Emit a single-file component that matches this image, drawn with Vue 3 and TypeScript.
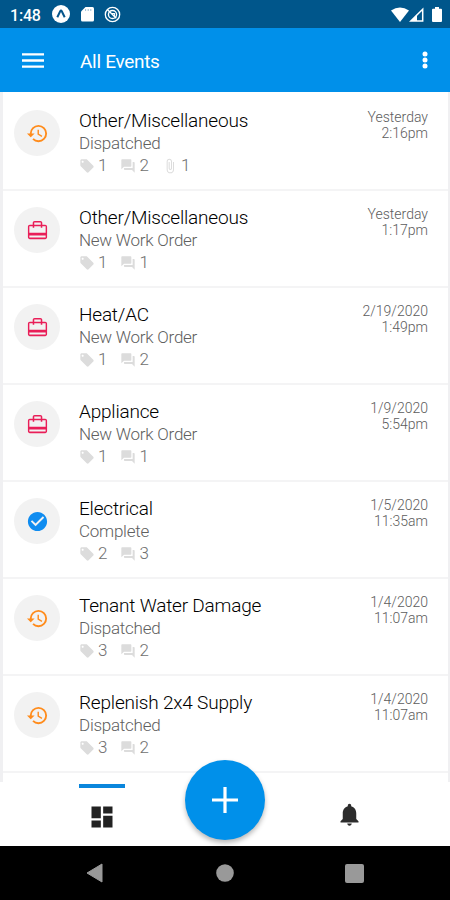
<script setup lang="ts">
type Kind = 'history' | 'travel' | 'done'

interface EventItem {
  title: string
  status: string
  kind: Kind
  tags: number
  comments: number
  files?: number
  date: string
  time: string
}

const events: EventItem[] = [
  { title: 'Other/Miscellaneous', status: 'Dispatched', kind: 'history', tags: 1, comments: 2, files: 1, date: 'Yesterday', time: '2:16pm' },
  { title: 'Other/Miscellaneous', status: 'New Work Order', kind: 'travel', tags: 1, comments: 1, date: 'Yesterday', time: '1:17pm' },
  { title: 'Heat/AC', status: 'New Work Order', kind: 'travel', tags: 1, comments: 2, date: '2/19/2020', time: '1:49pm' },
  { title: 'Appliance', status: 'New Work Order', kind: 'travel', tags: 1, comments: 1, date: '1/9/2020', time: '5:54pm' },
  { title: 'Electrical', status: 'Complete', kind: 'done', tags: 2, comments: 3, date: '1/5/2020', time: '11:35am' },
  { title: 'Tenant Water Damage', status: 'Dispatched', kind: 'history', tags: 3, comments: 2, date: '1/4/2020', time: '11:07am' },
  { title: 'Replenish 2x4 Supply', status: 'Dispatched', kind: 'history', tags: 3, comments: 2, date: '1/4/2020', time: '11:07am' },
]

const kindPaths: Record<Kind, string> = {
  history: 'M13 3a9 9 0 0 0-9 9H1l3.89 3.89.07.14L9 12H6c0-3.87 3.13-7 7-7s7 3.13 7 7-3.13 7-7 7c-1.93 0-3.68-.79-4.94-2.06l-1.42 1.42A8.954 8.954 0 0 0 13 21a9 9 0 0 0 0-18zm-1 5v5l4.28 2.54.72-1.21-3.5-2.08V8H12z',
  travel: 'M20 6h-3V4c0-1.11-.89-2-2-2H9c-1.11 0-2 .89-2 2v2H4c-1.11 0-2 .89-2 2v11c0 1.11.89 2 2 2h16c1.11 0 2-.89 2-2V8c0-1.11-.89-2-2-2zM8.600 3.600h6.800V6H8.600V3.600zM20.500 19.400H3.500v-2.300h17v2.300zm0-5H3.500V7.600H7v1.600h1.600V7.600h6.800v1.600H17V7.600h3.500v6.800z',
  done: 'M12 2C6.48 2 2 6.48 2 12s4.480 10 10 10 10-4.480 10-10S17.520 2 12 2zm-2 15l-5-5 1.410-1.410L10 14.170l7.590-7.590L19 8l-9 9z',
}
</script>

<template>
  <div class="screen">
    <header class="status-bar">
      <span class="clock">1:48</span>
      <svg class="st-icon" viewBox="0 0 18 18">
        <circle cx="9" cy="9" r="9" fill="#fff" />
        <path d="M5.300 12.200 8.200 6.200q.8-1.300 1.600 0l2.900 6" fill="none" stroke="#04548a" stroke-width="2" />
      </svg>
      <svg class="st-icon card" viewBox="0 0 13 16">
        <path d="M4.500 1H11.500Q13 1 13 2.500V14Q13 15.500 11.500 15.500H1.500Q0 15.500 0 14V5.500Z" fill="#fff" />
        <path d="M4.600 3v2M7.200 3v2M9.800 3v2" stroke="#9dbdd3" stroke-width="1" />
      </svg>
      <svg class="st-icon ring" viewBox="0 0 18 18" fill="none" stroke="#fff">
        <circle cx="9" cy="9" r="7.600" stroke-width="1.400" />
        <circle cx="9" cy="9" r="4.300" stroke-width="1.500" />
        <path d="M3.500 3.800 13 13" stroke-width="1.500" />
        <path d="M8 8h3v3" stroke-width="1.200" />
      </svg>
      <div class="system">
        <svg width="18" height="15" viewBox="0 0 18 15"><path d="M0 3.600Q9-2.600 18 3.600L9 15Z" fill="#fff" /></svg>
        <svg width="15" height="15" viewBox="0 0 15 15">
          <path d="M13.700 2.200V14H1.800Z" fill="none" stroke="#fff" stroke-width="1.500" />
          <path d="M8 7.500V14H2Z" fill="#fff" />
        </svg>
        <svg class="battery" width="10" height="15" viewBox="0 0 10 15"><path d="M3 0h4v1.700h2q1 0 1 1V14q0 1-1 1H1q-1 0-1-1V2.700q0-1 1-1h2z" fill="#fff" /></svg>
      </div>
    </header>

    <div class="app-bar">
      <svg class="menu" width="22" height="15" viewBox="0 0 22 15"><path d="M0 1.300h22M0 7.500h22M0 13.700h22" stroke="#fff" stroke-width="2.300" /></svg>
      <h1>All Events</h1>
      <svg class="more" width="6" height="18" viewBox="0 0 6 18" fill="#fff"><circle cx="3" cy="3" r="2.500" /><circle cx="3" cy="9" r="2.500" /><circle cx="3" cy="15" r="2.500" /></svg>
    </div>

    <main class="list">
      <article v-for="(e, i) in events" :key="i" class="row">
        <div class="avatar" :class="e.kind">
          <svg viewBox="0 0 24 24"><path :d="kindPaths[e.kind]" fill="currentColor" /></svg>
        </div>
        <div class="info">
          <div class="title">{{ e.title }}</div>
          <div class="status">{{ e.status }}</div>
          <div class="meta">
            <span class="count">
              <svg width="16" height="16" viewBox="0 0 24 24"><path d="M21.410 11.580l-9-9C12.050 2.220 11.550 2 11 2H4c-1.100 0-2 .9-2 2v7c0 .55.220 1.050.590 1.420l9 9c.360.360.860.580 1.410.580s1.050-.220 1.410-.590l7-7c.370-.360.590-.860.590-1.410s-.230-1.060-.590-1.420zM5.500 7C4.670 7 4 6.330 4 5.500S4.670 4 5.500 4 7 4.670 7 5.500 6.330 7 5.500 7z" fill="currentColor" /></svg>
              {{ e.tags }}
            </span>
            <span class="count">
              <svg width="16" height="16" viewBox="0 0 24 24"><path d="M21 6h-2v9H6v2c0 .55.450 1 1 1h11l4 4V7c0-.55-.450-1-1-1zm-4 6V3c0-.55-.450-1-1-1H3c-.55 0-1 .450-1 1v14l4-4h10c.55 0 1-.450 1-1z" fill="currentColor" /></svg>
              {{ e.comments }}
            </span>
            <span v-if="e.files" class="count">
              <svg width="16" height="16" viewBox="0 0 24 24"><path d="M16.500 6v11.500c0 2.210-1.790 4-4 4s-4-1.790-4-4V5c0-1.380 1.120-2.500 2.500-2.500s2.500 1.120 2.500 2.500v10.500c0 .55-.450 1-1 1s-1-.450-1-1V6H10v9.500c0 1.380 1.120 2.500 2.500 2.500s2.500-1.120 2.500-2.500V5c0-2.210-1.790-4-4-4S7 2.790 7 5v12.500c0 3.040 2.460 5.500 5.500 5.500s5.500-2.460 5.500-5.500V6h-1.500z" fill="currentColor" /></svg>
              {{ e.files }}
            </span>
          </div>
        </div>
        <div class="when">
          <div>{{ e.date }}</div>
          <div>{{ e.time }}</div>
        </div>
      </article>
    </main>

    <nav class="tabs">
      <button class="tab active" aria-label="Dashboard">
        <svg width="28" height="28" viewBox="0 0 24 24"><path d="M3 13h8V3H3v10zm0 8h8v-6H3v6zm10 0h8V11h-8v10zm0-18v6h8V3h-8z" fill="#222" /></svg>
      </button>
      <button class="fab" aria-label="Add">
        <svg width="26" height="26" viewBox="0 0 26 26"><path d="M13 0v26M0 13h26" stroke="#fff" stroke-width="3.200" /></svg>
      </button>
      <button class="tab" aria-label="Notifications">
        <svg class="bell" width="27" height="27" viewBox="0 0 24 24"><path d="M12 22c1.100 0 2-.9 2-2h-4c0 1.100.890 2 2 2zm6-6v-5c0-3.070-1.640-5.640-4.500-6.320V4c0-.83-.670-1.500-1.500-1.500s-1.500.670-1.500 1.500v.680C7.630 5.360 6 7.920 6 11v5l-2 2v1h16v-1l-2-2z" fill="#2c2c2c" /></svg>
      </button>
    </nav>

    <footer class="system-nav">
      <svg width="17" height="20" viewBox="0 0 17 20"><path d="M16 1v18L1 10Z" fill="#999" stroke="#999" stroke-linejoin="round" /></svg>
      <svg class="home" width="18" height="18" viewBox="0 0 18 18"><circle cx="9" cy="9" r="8.800" fill="#999" /></svg>
      <svg width="19" height="19" viewBox="0 0 19 19"><rect width="19" height="19" rx="2" fill="#999" /></svg>
    </footer>
  </div>
</template>

<style>
body {
  margin: 0;
}
</style>

<style scoped>
.screen {
  width: 450px;
  height: 900px;
  display: flex;
  flex-direction: column;
  overflow: hidden;
  background: #fff;
  font-family: Roboto, "Liberation Sans", sans-serif;
}
svg {
  display: block;
  flex: none;
}
.status-bar {
  height: 28px;
  flex: none;
  box-sizing: border-box;
  background: #00568b;
  display: flex;
  align-items: center;
  padding: 0 8px 0 10px;
  color: #fff;
}
.clock {
  width: 42px;
  margin-top: 2px;
  font-size: 16px;
  font-weight: 500;
  letter-spacing: -0.2px;
}
.st-icon {
  width: 18px;
  height: 18px;
  margin-right: 10px;
}
.st-icon.card {
  width: 13px;
  height: 16px;
  margin: 0 10px 0 1px;
}
.st-icon.ring {
  width: 17px;
  height: 17px;
}
.system {
  margin-left: auto;
  display: flex;
  align-items: center;
}
.battery {
  margin-left: 8px;
}
.app-bar {
  height: 64px;
  flex: none;
  box-sizing: border-box;
  background: #0090ea;
  display: flex;
  align-items: center;
  padding: 0 22px;
  color: #fff;
}
h1 {
  margin: 3px 0 0 36px;
  font-size: 19px;
  font-weight: 400;
  line-height: 24px;
  letter-spacing: -0.3px;
}
.more {
  margin-left: auto;
}
.list {
  height: 690px;
  flex: none;
  box-sizing: border-box;
  overflow: hidden;
  padding-top: 2px;
  border-left: 3px solid #f0f0f2;
  border-right: 2px solid #f0f0f2;
}
.row {
  height: 97px;
  box-sizing: border-box;
  display: flex;
  padding: 0 20px 0 11px;
  border-bottom: 2px solid #f4f4f5;
}
.avatar {
  width: 46px;
  height: 46px;
  margin: 16px 19px 0 0;
  border-radius: 50%;
  background: #f2f2f2;
  display: flex;
  align-items: center;
  justify-content: center;
}
.avatar svg {
  width: 23px;
  height: 23px;
}
.avatar.history {
  color: #ff8c1c;
}
.avatar.travel {
  color: #e91e58;
}
.avatar.done {
  color: #0f8cf0;
}
.info {
  flex: 1;
  padding-top: 15px;
}
.title {
  font-size: 19px;
  line-height: 24px;
  font-weight: 300;
  letter-spacing: -0.2px;
  color: #000;
}
.status {
  margin-top: -1px;
  font-size: 17px;
  line-height: 22px;
  font-weight: 300;
  letter-spacing: -0.25px;
  color: #606060;
}
.meta {
  display: flex;
  gap: 13px;
  font-size: 17px;
  line-height: 22px;
  font-weight: 300;
  color: #707070;
}
.count {
  display: flex;
  align-items: center;
  gap: 3px;
}
.count svg {
  color: #dcdcdc;
  margin-top: 2px;
}
.when {
  padding-top: 15px;
  text-align: right;
  font-size: 14px;
  line-height: 16px;
  font-weight: 300;
  color: #5c5c5c;
}
.tabs {
  height: 64px;
  flex: none;
  display: flex;
  justify-content: center;
  padding-left: 1px;
  background: #fff;
}
button {
  padding: 0;
  border: 0;
  background: none;
}
.tab {
  width: 46px;
  height: 62px;
  box-sizing: border-box;
  border-top: 4px solid transparent;
  margin-top: 2px;
  display: flex;
  justify-content: center;
  padding-top: 15px;
}
.bell {
  margin-top: -2px;
}
.tab.active {
  border-top-color: #0a86dc;
}
.fab {
  width: 80px;
  height: 80px;
  margin: -22.500px 61.500px 0 60.500px;
  flex: none;
  border-radius: 50%;
  background: #0090ea;
  box-shadow: 0 3px 5px rgba(0, 0, 0, 0.28);
  display: flex;
  align-items: center;
  justify-content: center;
}
.system-nav {
  height: 54px;
  flex: none;
  box-sizing: border-box;
  background: #000;
  display: flex;
  justify-content: space-between;
  align-items: center;
  padding: 0 86px;
}
.home {
  margin-left: 2px;
}
</style>
